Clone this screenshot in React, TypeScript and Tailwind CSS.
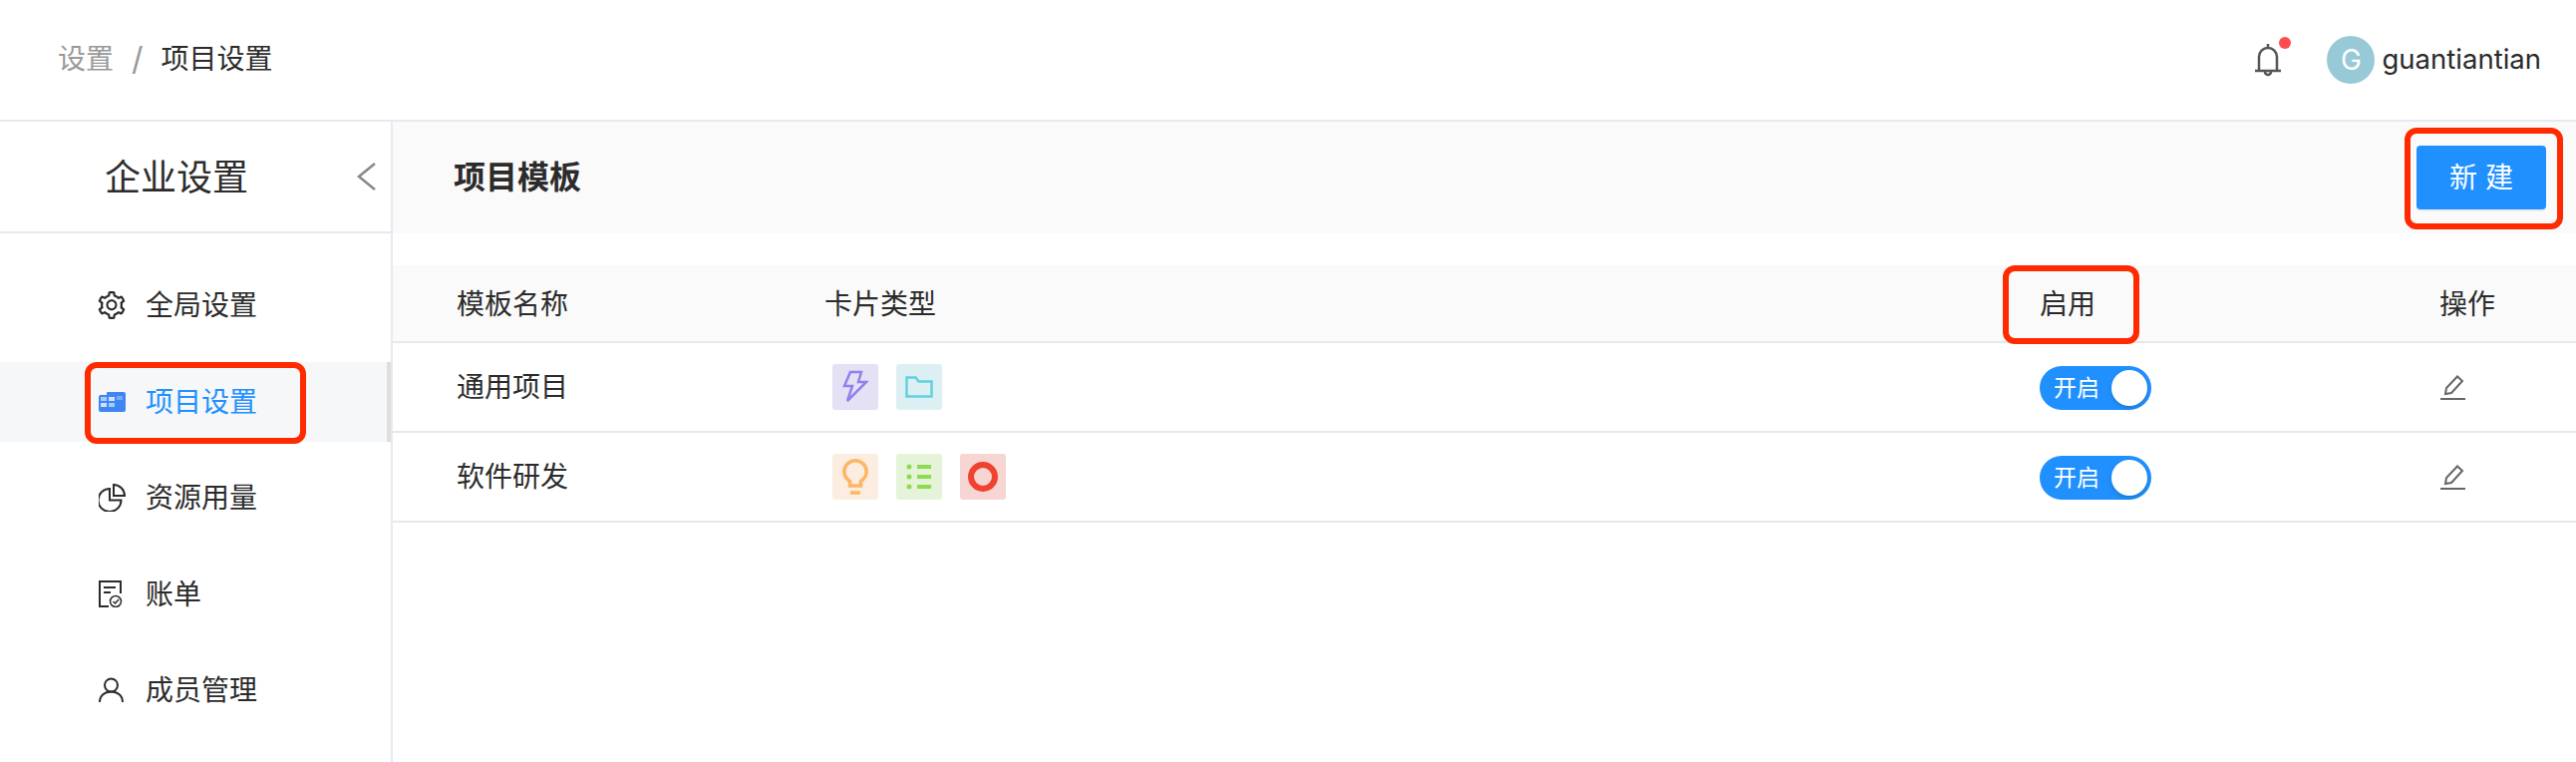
import { AiOutlineSetting } from "react-icons/ai";

const font = "font-['Inter','Noto_Sans_CJK_SC',sans-serif]";

const ProjectIcon = () => (
  <svg width="27" height="20" viewBox="0 0 27 20" className="shrink-0">
    <path d="M0 5a2 2 0 0 1 2-2h6V1a1 1 0 0 1 1-1h16a2 2 0 0 1 2 2v16a2 2 0 0 1-2 2H2a2 2 0 0 1-2-2z" fill="#3f86f2" />
    <rect x="2" y="5" width="6" height="4" fill="#a9c9f9" />
    <rect x="2" y="11" width="6" height="4" fill="#cfe0fb" />
    <rect x="10" y="5" width="6" height="4" fill="#cfe0fb" />
    <rect x="10" y="11" width="6" height="4" fill="#a9c9f9" />
    <rect x="18" y="4" width="6" height="4" fill="#7aa9f5" />
  </svg>
);

const PieIcon = () => (
  <svg width="27" height="28" viewBox="0 0 27 28" fill="none" stroke="#2b2b2b" strokeWidth="2" className="shrink-0">
    <path d="M11 5a11.500 11.500 0 1 0 11.500 11.500H11z" />
    <path d="M15 1a11 11 0 0 1 11 11H15z" />
  </svg>
);

const BillIcon = () => (
  <svg width="24" height="27" viewBox="0 0 24 27" fill="none" stroke="#2b2b2b" strokeWidth="2" className="shrink-0">
    <path d="M10 26H1V1h21v12" />
    <path d="M5 7h12M5 12h7" />
    <circle cx="17" cy="21" r="5.500" strokeWidth="1.500" />
    <path d="M14.500 21l2 2 3.500-4" strokeWidth="1.500" />
  </svg>
);

const UserIcon = () => (
  <svg width="25" height="26" viewBox="0 0 25 26" fill="none" stroke="#2b2b2b" strokeWidth="2" className="shrink-0">
    <circle cx="12.500" cy="8" r="6.500" />
    <path d="M1 25c0-6.500 5-10.500 11.500-10.500S24 18.500 24 25" />
  </svg>
);

const BellIcon = () => (
  <svg width="26" height="34" viewBox="0 0 26 34" fill="none" stroke="#555" strokeWidth="2.500">
    <path d="M0 28h26" />
    <path d="M4 28V14a9 9 0 0 1 18 0v14" />
    <path d="M13 1v4" />
    <path d="M10 29a3 3 0 0 0 6 0" />
  </svg>
);

const EditIcon = () => (
  <svg width="26" height="26" viewBox="0 0 26 26" fill="none" stroke="#666" strokeWidth="2">
    <path d="M0 25h25" />
    <path d="M5 20l1-6L17 2.500l5 4.500L11 19z" />
  </svg>
);

const BoltIcon = () => (
  <svg width="26" height="34" viewBox="0 0 26 34" fill="none" stroke="#9081ee" strokeWidth="2.500">
    <path d="M8 2h11l-3 10h8L5 31l5-15H2z" />
  </svg>
);

const FolderIcon = () => (
  <svg width="28" height="22" viewBox="0 0 28 22" fill="none" stroke="#62cfe0" strokeWidth="2.500">
    <path d="M1.500 1.500h9l3 4h13v15h-25z" />
  </svg>
);

const BulbIcon = () => (
  <svg width="26" height="36" viewBox="0 0 26 36" fill="none" stroke="#ffb566" strokeWidth="3.500">
    <path d="M7.500 27v-4.500C4 20 1.800 17 1.800 13a11.200 11.200 0 0 1 22.400 0c0 4-2.200 7-5.700 9.500V27z" />
    <path d="M8 34h10" />
  </svg>
);

const ListIcon = () => (
  <svg width="26" height="26" viewBox="0 0 26 26" fill="#8ddc50">
    <circle cx="3" cy="3" r="2.500" />
    <circle cx="3" cy="13" r="2.500" />
    <circle cx="3" cy="23" r="2.500" />
    <rect x="11" y="1" width="14" height="4" />
    <rect x="11" y="11" width="14" height="4" />
    <rect x="11" y="21" width="14" height="4" />
  </svg>
);

const CircleIcon = () => (
  <div className="h-[30px] w-[30px] rounded-full border-[6px] border-[#f0432f]" />
);

const Tag = ({ bg, children }: { bg: string; children: React.ReactNode }) => (
  <div className={`flex h-[46px] w-[46px] items-center justify-center rounded-[3px] ${bg}`}>{children}</div>
);

const Toggle = () => (
  <div className="mt-0.5 flex h-11 w-[112px] items-center justify-between rounded-full bg-[#2090ff] pl-[14px] pr-1">
    <span className="text-[23px] leading-none text-white">开启</span>
    <span className="h-9 w-9 rounded-full bg-white shadow-[0_2px_4px_rgba(0,35,11,0.2)]" />
  </div>
);

const NavItem = ({
  icon,
  label,
  active,
}: {
  icon: React.ReactNode;
  label: string;
  active?: boolean;
}) => (
  <div className={`relative flex h-20 items-center pl-[99px] ${active ? "bg-[#f6f7f9] text-[#2090ff]" : "text-[#2b2b2b]"}`}>
    <span className="flex w-[47px] items-center">{icon}</span>
    <span className="text-[28px] leading-none">{label}</span>
    {active && <span className="absolute right-0 top-0 h-full w-1 bg-[#e2dcdc]" />}
    {active && (
      <span className="absolute left-[85px] top-0 h-[82px] w-[222px] rounded-[12px] border-[6px] border-[#ff2a00]" />
    )}
  </div>
);

const Row = ({
  name,
  tags,
}: {
  name: string;
  tags: React.ReactNode;
}) => (
  <div className="grid h-[90px] grid-cols-[369px_1219px_401px_1fr] items-center border-b-2 border-[#e8e8e8] pl-[64px] text-[28px] text-[#2b2b2b]">
    <span>{name}</span>
    <div className="flex gap-[18px] pl-[8px]">{tags}</div>
    <Toggle />
    <div className="pl-[1px]">
      <EditIcon />
    </div>
  </div>
);

export default function App() {
  return (
    <div className={`flex h-[764px] w-[2584px] flex-col overflow-hidden bg-white ${font}`}>
      <header className="flex h-[122px] shrink-0 items-center justify-between border-b-2 border-[#e6e9ef] pl-[58px] pr-[35px]">
        <div className="mb-0.5 flex items-center text-[28px] leading-none">
          <span className="text-[#999]">设置</span>
          <span className="mx-[18px] text-[32px] text-[#999]">/</span>
          <span className="text-[#2b2b2b]">项目设置</span>
        </div>
        <div className="flex items-center">
          <div className="relative mr-[46px] h-[34px] w-[26px]">
            <BellIcon />
            <span className="absolute -right-[10px] -top-[6px] h-3 w-3 rounded-full bg-[#ff4d4f]" />
          </div>
          <div className="mr-[7px] flex h-12 w-12 items-center justify-center rounded-full bg-[#97c9d6] text-[28px] leading-none text-white">
            G
          </div>
          <span className="text-[27.5px] leading-none text-[#2b2b2b]">guantiantian</span>
        </div>
      </header>
      <div className="flex flex-1">
        <aside className="w-[394px] shrink-0 border-r-2 border-[#e6e9ef]">
          <div className="relative flex h-[112px] items-center border-b-2 border-[#e6e9ef] pl-[105px] pt-0.5">
            <span className="text-[36px] leading-none text-[#2b2b2b]">企业设置</span>
            <svg width="20" height="30" viewBox="0 0 20 30" fill="none" stroke="#888" strokeWidth="2.500" className="absolute left-[358px] top-[40px]">
              <path d="M18 2L2 15l16 13" />
            </svg>
          </div>
          <nav className="flex flex-col gap-[16.500px] pt-[32px]">
            <NavItem icon={<AiOutlineSetting size={32} className="-ml-[3px]" />} label="全局设置" />
            <NavItem icon={<ProjectIcon />} label="项目设置" active />
            <NavItem icon={<PieIcon />} label="资源用量" />
            <NavItem icon={<BillIcon />} label="账单" />
            <NavItem icon={<UserIcon />} label="成员管理" />
          </nav>
        </aside>
        <main className="flex-1">
          <div className="relative flex h-[112px] items-center justify-between bg-[#fafafa] pl-[61px] pr-[30px]">
            <span className="text-[32px] font-bold leading-none text-[#2b2b2b]">项目模板</span>
            <button className="flex h-16 w-[130px] items-center justify-center rounded bg-[#2090ff] text-[28px] leading-none text-white shadow-[0_2px_0_rgba(0,0,0,0.05)]">
              新 建
            </button>
            <span className="absolute left-[2018px] top-[6px] h-[102px] w-[159px] rounded-[12px] border-[6px] border-[#ff2a00]" />
          </div>
          <div className="relative mt-[32px] grid h-[78px] grid-cols-[369px_1219px_401px_1fr] items-center border-b-2 border-[#e8e8e8] bg-[#fafafa] pl-[64px] pt-0.5 text-[28px] text-[#2b2b2b]">
            <span>模板名称</span>
            <span>卡片类型</span>
            <span>启用</span>
            <span>操作</span>
            <span className="absolute left-[1615px] top-0 h-[79px] w-[137px] rounded-[12px] border-[6px] border-[#ff2a00]" />
          </div>
          <Row
            name="通用项目"
            tags={
              <>
                <Tag bg="bg-[#e4e1f5]"><BoltIcon /></Tag>
                <Tag bg="bg-[#dcf0f4]"><FolderIcon /></Tag>
              </>
            }
          />
          <Row
            name="软件研发"
            tags={
              <>
                <Tag bg="bg-[#fbeee0]"><BulbIcon /></Tag>
                <Tag bg="bg-[#e5f3d9]"><ListIcon /></Tag>
                <Tag bg="bg-[#f6d5d2]"><CircleIcon /></Tag>
              </>
            }
          />
        </main>
      </div>
    </div>
  );
}
